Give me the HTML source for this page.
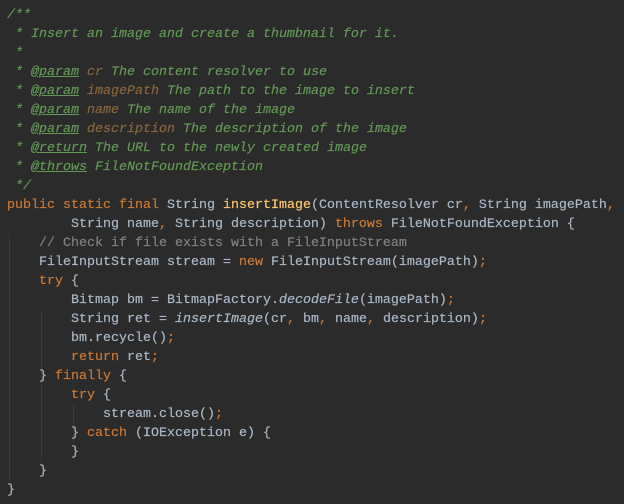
<!DOCTYPE html>
<html><head><meta charset="utf-8"><style>
html,body{margin:0;padding:0;background:#2b2b2b;width:624px;height:504px;overflow:hidden}
pre{margin:0;padding:6px 0 0 7px;font-family:"Liberation Mono",monospace;font-size:13.33px;line-height:19px;color:#a9b7c6;position:relative;z-index:1;-webkit-text-stroke:0.2px}
.c{color:#808080}.d{color:#629755;font-style:italic}.t{color:#629755;font-style:italic;text-decoration:underline}
.p{color:#8a653b;font-style:italic}.k{color:#cc7832}.m{color:#ffc66d}.i{font-style:italic}
.g{position:absolute;width:1px;background:#393939}
</style></head><body>
<div class="g" style="left:9px;top:234px;height:247px"></div>
<div class="g" style="left:41px;top:310px;height:152px"></div>
<div class="g" style="left:73px;top:405px;height:38px"></div>
<pre><span class="d">/**
 * Insert an image and create a thumbnail for it.
 *
 * <span class="t">@param</span> <span class="p">cr</span> The content resolver to use
 * <span class="t">@param</span> <span class="p">imagePath</span> The path to the image to insert
 * <span class="t">@param</span> <span class="p">name</span> The name of the image
 * <span class="t">@param</span> <span class="p">description</span> The description of the image
 * <span class="t">@return</span> The URL to the newly created image
 * <span class="t">@throws</span> FileNotFoundException
 */</span>
<span class="k">public static final</span> String <span class="m">insertImage</span>(ContentResolver cr<span class="k">,</span> String imagePath<span class="k">,</span>
        String name<span class="k">,</span> String description) <span class="k">throws</span> FileNotFoundException {
    <span class="c">// Check if file exists with a FileInputStream</span>
    FileInputStream stream = <span class="k">new</span> FileInputStream(imagePath)<span class="k">;</span>
    <span class="k">try</span> {
        Bitmap bm = BitmapFactory.<span class="i">decodeFile</span>(imagePath)<span class="k">;</span>
        String ret = <span class="i">insertImage</span>(cr<span class="k">,</span> bm<span class="k">,</span> name<span class="k">,</span> description)<span class="k">;</span>
        bm.recycle()<span class="k">;</span>
        <span class="k">return</span> ret<span class="k">;</span>
    } <span class="k">finally</span> {
        <span class="k">try</span> {
            stream.close()<span class="k">;</span>
        } <span class="k">catch</span> (IOException e) {
        }
    }
}</pre>
</body></html>
